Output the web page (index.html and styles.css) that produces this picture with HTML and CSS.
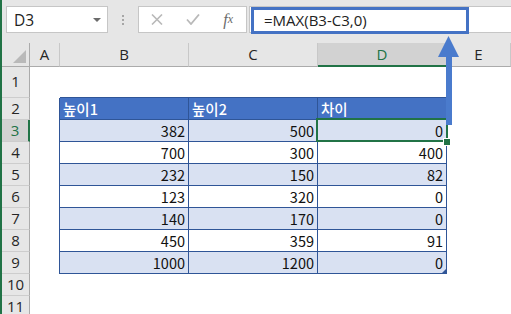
FILE: index.html
```html
<!DOCTYPE html>
<html lang="ko">
<head>
    <meta charset="UTF-8">
    <title>MAX 차이</title>
    <link rel="stylesheet" href="styles.css">
</head>
<body>
    <div class="window">
        <div class="edge"></div>
        <div class="excel">
            <!-- Formula bar -->
            <div class="toolbar">
                <div class="namebox">
                    <span>D3</span>
                    <svg width="8" height="4" viewBox="0 0 8 4"><path d="M0 0h8L4 4z" fill="#6b6b6b"/></svg>
                </div>
                <div class="grip"><i></i><i></i><i></i></div>
                <div class="fbuttons">
                    <span class="fbtn">
                        <svg width="12" height="11" viewBox="0 0 12 11"><path d="M1 0.5l10 10M11 0.5l-10 10" stroke="#b9b9b9" stroke-width="1.6" fill="none"/></svg>
                    </span>
                    <span class="fbtn">
                        <svg width="14" height="11" viewBox="0 0 14 11"><path d="M1 5.5l4 4.5 8-9.5" stroke="#b9b9b9" stroke-width="1.8" fill="none"/></svg>
                    </span>
                    <span class="fbtn fx">f<small>x</small></span>
                </div>
                <div class="formula">
                    <div class="formula-hl">=MAX(B3-C3,0)</div>
                </div>
            </div>

            <!-- Sheet -->
            <div class="sheet">
                <div class="row colheads">
                    <div class="h corner"></div>
                    <div class="h">A</div>
                    <div class="h">B</div>
                    <div class="h">C</div>
                    <div class="h sel">D</div>
                    <div class="h">E</div>
                </div>
                <div class="row r1">
                    <div class="rh">1</div>
                    <div class="c"></div>
                    <div class="c tt"></div>
                    <div class="c tt"></div>
                    <div class="c tt"></div>
                    <div class="c"></div>
                </div>
                <div class="row thead">
                    <div class="rh">2</div>
                    <div class="c tl"></div>
                    <div class="c tc">높이1</div>
                    <div class="c tc">높이2</div>
                    <div class="c tc">차이</div>
                    <div class="c"></div>
                </div>
                <div class="row band">
                    <div class="rh sel">3</div>
                    <div class="c tl"></div>
                    <div class="c tc">382</div>
                    <div class="c tc">500</div>
                    <div class="c tc active">0<span class="selbox"></span><span class="fill"></span></div>
                    <div class="c"></div>
                </div>
                <div class="row">
                    <div class="rh">4</div>
                    <div class="c tl"></div>
                    <div class="c tc">700</div>
                    <div class="c tc">300</div>
                    <div class="c tc">400</div>
                    <div class="c"></div>
                </div>
                <div class="row band">
                    <div class="rh">5</div>
                    <div class="c tl"></div>
                    <div class="c tc">232</div>
                    <div class="c tc">150</div>
                    <div class="c tc">82</div>
                    <div class="c"></div>
                </div>
                <div class="row">
                    <div class="rh">6</div>
                    <div class="c tl"></div>
                    <div class="c tc">123</div>
                    <div class="c tc">320</div>
                    <div class="c tc">0</div>
                    <div class="c"></div>
                </div>
                <div class="row band">
                    <div class="rh">7</div>
                    <div class="c tl"></div>
                    <div class="c tc">140</div>
                    <div class="c tc">170</div>
                    <div class="c tc">0</div>
                    <div class="c"></div>
                </div>
                <div class="row">
                    <div class="rh">8</div>
                    <div class="c tl"></div>
                    <div class="c tc">450</div>
                    <div class="c tc">359</div>
                    <div class="c tc">91</div>
                    <div class="c"></div>
                </div>
                <div class="row band">
                    <div class="rh">9</div>
                    <div class="c tl"></div>
                    <div class="c tc">1000</div>
                    <div class="c tc">1200</div>
                    <div class="c tc last">0<span class="resize"></span></div>
                    <div class="c"></div>
                </div>
                <div class="row">
                    <div class="rh">10</div>
                    <div class="c"></div><div class="c"></div><div class="c"></div><div class="c"></div><div class="c"></div>
                </div>
                <div class="row">
                    <div class="rh">11</div>
                    <div class="c"></div><div class="c"></div><div class="c"></div><div class="c"></div><div class="c"></div>
                </div>
            </div>
        </div>

        <!-- Annotation arrow -->
        <svg class="arrow" width="26" height="92" viewBox="0 0 26 92">
            <polygon points="12.5,1 23,22 16,22 16,90 10,90 10,22 2,22" fill="#4a7bcd"/>
        </svg>
    </div>
</body>
</html>
```

FILE: styles.css
```css
/* General */
body {
    margin: 0;
    font-family: "Open Sans", sans-serif;
    background: #fff;
    color: #222;
}

.window {
    position: relative;
    display: flex;
    width: 511px;
    height: 314px;
    overflow: hidden;
}

.edge {
    flex: none;
    width: 2px;
    background: #217346;
}

.excel {
    flex: 1;
    min-width: 0;
    display: flex;
    flex-direction: column;
}

/* Formula bar */
.toolbar {
    flex: none;
    height: 43px;
    box-sizing: border-box;
    padding: 6px 0 0 4px;
    background: #e6e6e6;
    display: flex;
    align-items: flex-start;
}

.namebox {
    flex: none;
    width: 102px;
    height: 27px;
    box-sizing: border-box;
    padding: 0 6px 0 7px;
    background: #fff;
    border: 1px solid #c6c6c6;
    display: flex;
    align-items: center;
    justify-content: space-between;
    font-size: 15.5px;
    color: #222;
}

.grip {
    flex: none;
    width: 2px;
    margin: 9px 14px 0;
    display: flex;
    flex-direction: column;
    gap: 2px;
}

.grip i {
    display: block;
    width: 2px;
    height: 2px;
    background: #a6a6a6;
}

.fbuttons {
    flex: none;
    width: 109px;
    height: 27px;
    box-sizing: border-box;
    background: #fff;
    border: 1px solid #c6c6c6;
    display: flex;
    align-items: center;
}

.fbtn {
    width: 36px;
    display: flex;
    justify-content: center;
    align-items: center;
}

.fx {
    font-family: "Liberation Serif", serif;
    font-style: italic;
    font-size: 16px;
    color: #6b6b6b;
}

.fx small {
    font-size: 12px;
}

.formula {
    flex: 1;
    height: 27px;
    margin-left: 2px;
    box-sizing: border-box;
    background: #fff;
    border: 1px solid #c6c6c6;
    border-right: none;
}

.formula-hl {
    width: 218px;
    height: 27px;
    margin-left: 1px;
    box-sizing: border-box;
    border: 3px solid #4472c4;
    padding-left: 10px;
    font-size: 15px;
    line-height: 20px;
    color: #222;
}

/* Sheet */
.row {
    display: grid;
    grid-template-columns: 28px 30px 129px 129px 129px 1fr;
    height: 22px;
}

.row > div {
    box-sizing: border-box;
    white-space: nowrap;
}

.colheads {
    height: 23px;
}

.h {
    background: #e6e6e6;
    border-right: 1px solid #c8c8c8;
    border-bottom: 1px solid #ababab;
    text-align: center;
    font-size: 15px;
    line-height: 22px;
    color: #262626;
}

.h.sel {
    background: #d2d2d2;
    color: #217346;
    border-bottom: 2px solid #217346;
}

.corner {
    position: relative;
    border-right-color: #ababab;
}

.corner::after {
    content: "";
    position: absolute;
    right: 3px;
    bottom: 3px;
    border-left: 13px solid transparent;
    border-bottom: 13px solid #b9b9b9;
}

.rh {
    background: #e6e6e6;
    border-right: 1px solid #ababab;
    border-bottom: 1px solid #cdcdcd;
    text-align: center;
    font-size: 15px;
    line-height: 21px;
    color: #262626;
}

.rh.sel {
    background: #d2d2d2;
    color: #217346;
    border-right: 2px solid #217346;
}

.r1 {
    height: 32px;
}

.r1 .rh {
    line-height: 31px;
}

.c {
    font-family: "Noto Sans CJK KR", "Open Sans", sans-serif;
    font-size: 14.5px;
    line-height: 21px;
    text-align: right;
    padding-right: 3px;
    color: #111;
}

/* Table */
.tt {
    border-bottom: 1px solid #2f5597;
}

.tl {
    border-right: 1px solid #2f5597;
}

.tc {
    border-right: 1px solid #2f5597;
    border-bottom: 1px solid #2f5597;
}

.band .tc {
    background: #d9e1f2;
}

.thead .tc {
    background: #4472c4;
    color: #fff;
    text-align: left;
    padding-left: 3px;
    font-weight: 500;
}

/* Selection */
.active,
.last {
    position: relative;
}

.selbox {
    position: absolute;
    left: -2px;
    top: -2px;
    right: -2px;
    bottom: -1px;
    border: 2px solid #217346;
}

.fill {
    position: absolute;
    right: -4px;
    bottom: -4px;
    width: 6px;
    height: 6px;
    background: #217346;
    box-shadow: 0 0 0 1px #fff;
}

.resize {
    position: absolute;
    right: 0;
    bottom: 0;
    border-left: 4px solid transparent;
    border-bottom: 4px solid #2f5597;
}

/* Annotation */
.arrow {
    position: absolute;
    left: 436px;
    top: 35px;
}
```
